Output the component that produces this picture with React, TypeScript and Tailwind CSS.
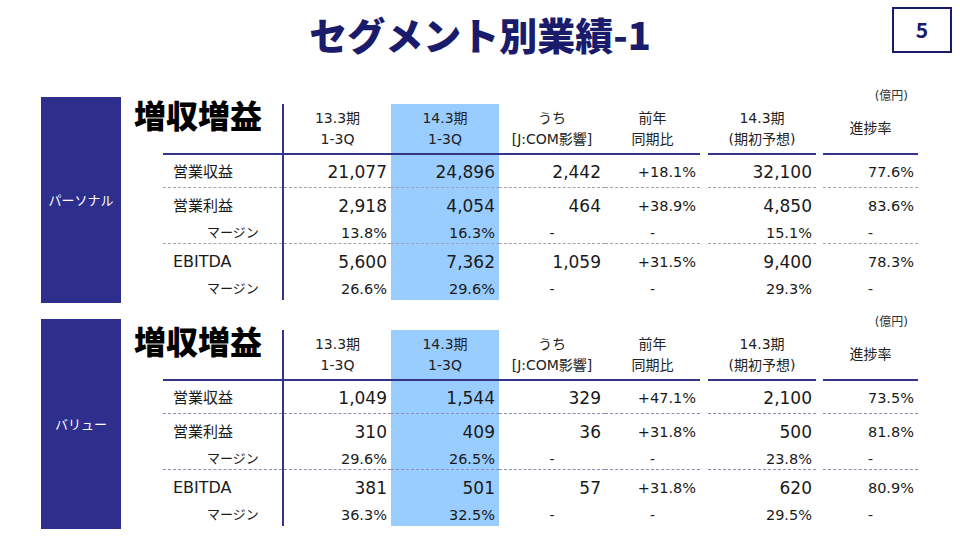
import React from "react";

type Seg = {
  name: string;
  top: string;
  line: string;
  rows: { label: string; sub?: boolean; vals: string[] }[];
};

const segments: Seg[] = [
  {
    name: "パーソナル",
    top: "-mt-[10px]",
    line: "border-[#a3a3b0]",
    rows: [
      { label: "営業収益", vals: ["21,077", "24,896", "2,442", "+18.1%", "32,100", "77.6%"] },
      { label: "営業利益", vals: ["2,918", "4,054", "464", "+38.9%", "4,850", "83.6%"] },
      { label: "マージン", sub: true, vals: ["13.8%", "16.3%", "-", "-", "15.1%", "-"] },
      { label: "EBITDA", vals: ["5,600", "7,362", "1,059", "+31.5%", "9,400", "78.3%"] },
      { label: "マージン", sub: true, vals: ["26.6%", "29.6%", "-", "-", "29.3%", "-"] },
    ],
  },
  {
    name: "バリュー",
    top: "-mt-[6px]",
    line: "border-[#8e8eb4]",
    rows: [
      { label: "営業収益", vals: ["1,049", "1,544", "329", "+47.1%", "2,100", "73.5%"] },
      { label: "営業利益", vals: ["310", "409", "36", "+31.8%", "500", "81.8%"] },
      { label: "マージン", sub: true, vals: ["29.6%", "26.5%", "-", "-", "23.8%", "-"] },
      { label: "EBITDA", vals: ["381", "501", "57", "+31.8%", "620", "80.9%"] },
      { label: "マージン", sub: true, vals: ["36.3%", "32.5%", "-", "-", "29.5%", "-"] },
    ],
  },
];

// label | vertical rule | 6 value columns (with small gaps before the last two)
const grid = "grid grid-cols-[119px_2px_107px_108px_106px_95px_8px_108px_7px_95px]";

const heads = [
  ["13.3期", "1-3Q"],
  ["14.3期", "1-3Q"],
  ["うち", "[J:COM影響]"],
  ["前年", "同期比"],
  ["14.3期", "(期初予想)"],
  ["進捗率"],
];

// 営業収益 | 営業利益 + マージン | EBITDA + マージン
const heights = ["h-[33px]", "h-[30px]", "h-[26px]", "h-[30px]", "h-[26px]"];
const pads = ["pt-[2px]", "pt-[6px]", "pt-[4px]", "pt-[6px]", "pt-[4px]"];
const dashed = [true, false, true, false, false];

function Value({ v }: { v: string }) {
  if (v === "-") return <span className="w-full text-center text-[14px]">-</span>;
  if (v.includes("%")) return <span className="w-full text-right pr-[4px] text-[14.5px]">{v}</span>;
  return <span className="w-full text-right pr-[4px] text-[17px]">{v}</span>;
}

function Segment({ seg, index }: { seg: Seg; index: number }) {
  return (
    <div className={`flex ml-[41px] ${index === 1 ? "mt-[16px]" : ""}`}>
      <div className="w-[80px] bg-[#2e2e8c] flex items-center justify-center text-white text-[13px] font-['Noto_Sans_CJK_JP',sans-serif]">
        {seg.name}
      </div>
      <div className="ml-[42px] flex flex-col pb-[3px]">
        <div className={`${seg.top} h-[17px] flex items-center justify-end pr-[10px] text-[12px] text-[#333]`}>(億円)</div>
        <div className={`${grid} h-[51px]`}>
          <div className="border-b-2 border-[#34348a]">
            <div className="-ml-[29px] -mt-[6px] text-[32px] leading-none font-black text-black whitespace-nowrap font-['Noto_Sans_CJK_JP',sans-serif]">
              増収増益
            </div>
          </div>
          <div className="bg-[#34348a]" />
          {heads.map((h, i) => (
            <React.Fragment key={i}>
              {i >= 4 && <div />}
              <div
                className={`border-b-2 border-[#34348a] flex flex-col items-center justify-center text-[14px] leading-[21px] text-[#222] ${i === 1 ? "bg-[#99ccff]" : ""}`}
              >
                {h.map((t, j) => (
                  <span key={j}>{t}</span>
                ))}
              </div>
            </React.Fragment>
          ))}
        </div>
        {seg.rows.map((r, ri) => {
          const b = dashed[ri] ? `border-b border-dashed ${seg.line}` : "";
          return (
            <div key={ri} className={`${grid} ${heights[ri]} leading-[20px]`}>
              <div
                className={`${b} ${pads[ri]} flex items-center ${r.sub ? "pl-[44px] text-[13px]" : r.label === "EBITDA" ? "pl-[10px] text-[16px]" : "pl-[10px] text-[15px]"}`}
              >
                {r.label}
              </div>
              <div className="bg-[#34348a]" />
              {r.vals.map((v, vi) => (
                <React.Fragment key={vi}>
                  {vi >= 4 && <div />}
                  <div className={`${b} ${pads[ri]} flex items-center ${vi === 1 ? "bg-[#99ccff]" : ""}`}>
                    <Value v={v} />
                  </div>
                </React.Fragment>
              ))}
            </div>
          );
        })}
      </div>
    </div>
  );
}

export default function App() {
  return (
    <div className="w-[960px] h-[540px] bg-white overflow-hidden text-[#1a1a1a] font-['DejaVu_Sans','Noto_Sans_CJK_JP',sans-serif]">
      <div className="h-[97px] grid grid-cols-[1fr_auto_1fr]">
        <div />
        <h1 className="pt-[15px] text-[38px] leading-none font-black text-[#1b1b6b] font-['Noto_Sans_CJK_JP',sans-serif]">
          セグメント別業績-1
        </h1>
        <div className="flex justify-end items-start pr-[8px] pt-[7px]">
          <div className="w-[60px] h-[46px] border-2 border-[#1b1b6b] flex items-center justify-center text-[21px] font-bold text-[#1b1b6b] font-['Noto_Sans_CJK_JP',sans-serif]">
            5
          </div>
        </div>
      </div>
      {segments.map((s, i) => (
        <Segment key={i} seg={s} index={i} />
      ))}
    </div>
  );
}
